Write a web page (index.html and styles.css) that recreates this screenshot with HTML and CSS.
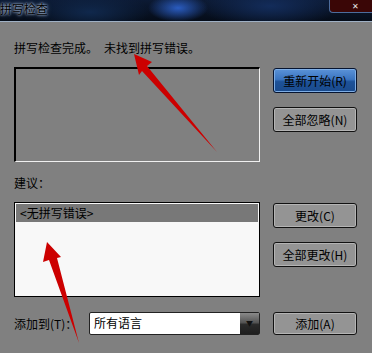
FILE: index.html
```html
<!DOCTYPE html>
<html lang="zh-CN">
<head>
    <meta charset="UTF-8">
    <title>拼写检查</title>
    <link rel="stylesheet" href="styles.css">
</head>
<body>
    <div class="window">
        <div class="titlebar">
            <span class="title">拼写检查</span>
            <div class="close">&#x2715;</div>
        </div>
        <div class="content">
            <div class="status">拼写检查完成。&ensp;未找到拼写错误。</div>

            <div class="row row-top">
                <div class="textbox"></div>
                <div class="buttons">
                    <div class="btn btn-blue">重新开始(R)</div>
                    <div class="btn">全部忽略(N)</div>
                </div>
            </div>

            <div class="label">建议：</div>

            <div class="row row-list">
                <div class="listbox">
                    <div class="item selected">&lt;无拼写错误&gt;</div>
                </div>
                <div class="buttons">
                    <div class="btn">更改(C)</div>
                    <div class="btn">全部更改(H)</div>
                </div>
            </div>

            <div class="row row-bottom">
                <div class="addto">
                    <span class="addlabel">添加到(T)：</span>
                    <div class="combo">
                        <span class="combo-text">所有语言</span>
                        <span class="combo-drop">&#9660;</span>
                    </div>
                </div>
                <div class="btn btn-add">添加(A)</div>
            </div>
        </div>

        <!-- red annotation arrows drawn over the dialog -->
        <svg class="arrows" width="372" height="353" viewBox="0 0 372 353">
            <polygon fill="#cc0000" points="134,54 152,62 147,66 217,152 142,71 139,75"/>
            <polygon fill="#cc0000" points="47,242 61,257 57,258 79,343 49,260 43,262"/>
        </svg>
    </div>
</body>
</html>
```

FILE: styles.css
```css
body {
    margin: 0;
    background-color: #808080;
    font-family: "Noto Sans CJK SC", "Noto Sans", sans-serif;
    font-size: 12px;
    color: #000;
}

.window {
    position: relative;
    width: 372px;
    height: 353px;
    overflow: hidden;
}

.titlebar {
    height: 21px;
    border-bottom: 1px solid #9fb0c4;
    display: flex;
    justify-content: space-between;
    background-color: #07101f;
    background-image:
        radial-gradient(ellipse 30px 14px at 178px 8px, #2a5cc0 0%, rgba(20, 50, 120, 0) 100%),
        radial-gradient(ellipse 60px 20px at 90px 12px, #10284c 0%, rgba(10, 30, 60, 0) 100%),
        radial-gradient(ellipse 70px 22px at 270px 6px, #132c5a 0%, rgba(10, 30, 60, 0) 100%),
        linear-gradient(#0c1a34, #050c18);
}

.title {
    line-height: 16px;
    font-size: 12px;
    color: #000;
    padding-top: 1px;
    text-shadow: 0 0 2px #a8b8d0, 0 0 3px #8098b8, 0 0 5px #6a84a8;
}

.close {
    width: 43px;
    height: 13px;
    background: #3a0606;
    border: 1px solid #4d6c9c;
    border-top: none;
    border-right: none;
    border-radius: 0 0 0 4px;
    color: #e8e8e8;
    font-size: 8px;
    line-height: 12px;
    text-align: center;
    padding-left: 8px;
    box-sizing: border-box;
}

.content {
    padding: 19px 15px 0 14px;
}

.status,
.label {
    line-height: 14px;
}

.row {
    display: grid;
    grid-template-columns: 246px 84px;
    column-gap: 13px;
}

.row-top {
    margin-top: 12px;
}

.textbox {
    height: 95px;
    box-sizing: border-box;
    border-top: 2px solid #000;
    border-left: 2px solid #000;
    border-right: 1px solid #f0f0f0;
    border-bottom: 1px solid #f0f0f0;
}

.buttons {
    display: flex;
    flex-direction: column;
    gap: 14px;
    padding-top: 1px;
}

.btn {
    height: 25px;
    box-sizing: border-box;
    border: 1px solid #111;
    border-radius: 3px;
    background: #949494;
    box-shadow: inset 0 0 0 1px #b4b4b4;
    text-align: center;
    line-height: 23px;
}

.btn-blue {
    border-color: #061430;
    background: linear-gradient(#5b93d8 0%, #3a74c0 45%, #1d5299 55%, #1a4a8c 100%);
    box-shadow: inset 0 0 0 1px #7eaee6;
}

.label {
    margin-top: 14px;
}

.row-list {
    margin-top: 12px;
}

.listbox {
    height: 95px;
    box-sizing: border-box;
    border: 1px solid #000;
    padding: 1px;
    background: #f8f8f8;
}

.item {
    height: 18px;
    line-height: 18px;
    padding-left: 4px;
}

.selected {
    background: #787878;
}

.row-bottom {
    margin-top: 15px;
}

.addto {
    display: flex;
    align-items: center;
}

.addlabel {
    width: 75px;
}

.combo {
    width: 171px;
    height: 23px;
    box-sizing: border-box;
    border: 1px solid #222;
    border-radius: 2px;
    background: #fff;
    display: flex;
    justify-content: space-between;
}

.combo-text {
    line-height: 20px;
    padding-left: 4px;
}

.combo-drop {
    width: 19px;
    background: linear-gradient(#8a8a8a 0%, #555 45%, #2a2a2a 55%, #1e1e1e 100%);
    color: #111;
    font-size: 7px;
    line-height: 21px;
    text-align: center;
}

.btn-add {
    height: 23px;
    line-height: 21px;
}

.arrows {
    position: absolute;
    left: 0;
    top: 0;
    pointer-events: none;
}
```
